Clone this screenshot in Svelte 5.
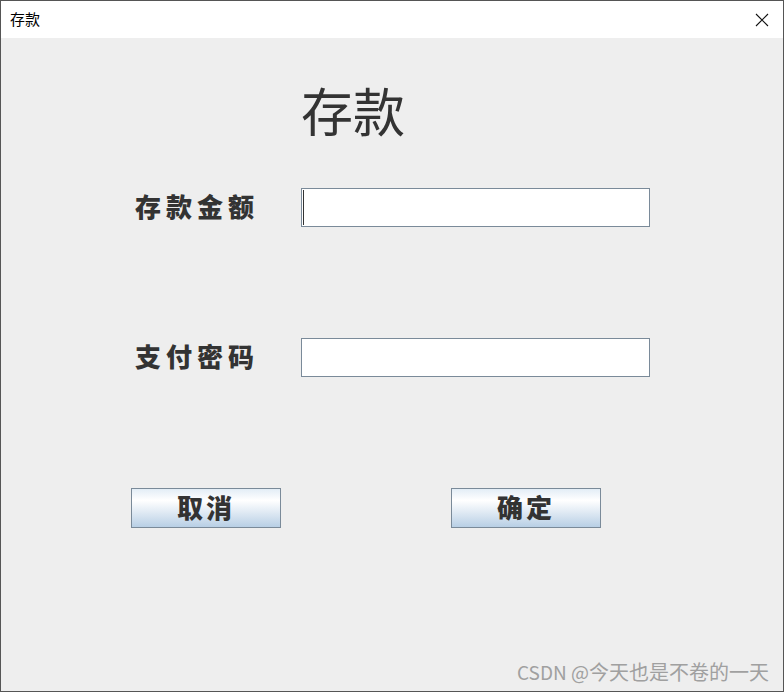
<script>
  let amount = $state('');
  let password = $state('');
</script>

<div class="window">
  <header class="titlebar">
    <span class="wintitle">存款</span>
    <svg class="close" width="14" height="14" viewBox="0 0 14 14" aria-label="关闭">
      <path d="M1 1 L13 13 M13 1 L1 13" stroke="#111" stroke-width="1.1" fill="none" />
    </svg>
  </header>
  <main class="content">
    <h1 class="heading">存款</h1>
    <div class="row first">
      <label class="label" for="amt">存款金额</label>
      <div class="field focused">
        <span class="caret"></span>
        <input id="amt" bind:value={amount} />
      </div>
    </div>
    <div class="row second">
      <label class="label" for="pwd">支付密码</label>
      <div class="field">
        <input id="pwd" type="password" bind:value={password} />
      </div>
    </div>
    <div class="actions">
      <button class="btn">取消</button>
      <button class="btn">确定</button>
    </div>
    <div class="watermark"><span class="latin">CSDN @</span>今天也是不卷的一天</div>
  </main>
</div>

<style>
  :global(body) {
    margin: 0;
    background: #eeeeee;
  }
  .window {
    box-sizing: border-box;
    width: 784px;
    height: 692px;
    border: 1px solid #555555;
    display: flex;
    flex-direction: column;
    font-family: "Noto Sans CJK SC", "Liberation Sans", sans-serif;
  }
  .titlebar {
    height: 37px;
    flex: none;
    background: #ffffff;
    display: flex;
    align-items: center;
    justify-content: space-between;
    padding: 0 14px 0 9px;
  }
  .wintitle {
    font-size: 15px;
    color: #000000;
    line-height: 35px;
    padding-bottom: 2px;
  }
  .close {
    display: block;
  }
  .content {
    flex: 1;
    background: #eeeeee;
    display: flex;
    flex-direction: column;
    min-height: 0;
  }
  .heading {
    margin: 41px 0 0 300px;
    height: 65px;
    font-size: 52px;
    font-weight: 400;
    line-height: 62px;
    color: #333333;
  }
  .row {
    display: flex;
    align-items: center;
    height: 39px;
    padding-left: 134px;
  }
  .first {
    margin-top: 44px;
  }
  .second {
    margin-top: 111px;
  }
  .label {
    width: 166px;
    height: 39px;
    font-size: 26px;
    font-weight: 900;
    letter-spacing: 5px;
    color: #333333;
    line-height: 36px;
    white-space: nowrap;
  }
  .field {
    position: relative;
    box-sizing: border-box;
    width: 349px;
    height: 39px;
    background: #ffffff;
    border: 1px solid #7a8a99;
  }
  .field input {
    box-sizing: border-box;
    width: 100%;
    height: 100%;
    border: 0;
    outline: 0;
    padding: 0 4px;
    background: transparent;
    display: block;
  }
  .caret {
    position: absolute;
    left: 1px;
    top: 1px;
    bottom: 1px;
    width: 1px;
    background: #333333;
  }
  .actions {
    display: flex;
    gap: 170px;
    margin-top: 111px;
    padding-left: 130px;
  }
  .btn {
    box-sizing: border-box;
    width: 150px;
    height: 40px;
    padding: 0 0 3px;
    border: 1px solid #7a8a99;
    background: linear-gradient(180deg, #e3edf6 0%, #ffffff 30%, #e6eef6 55%, #b8cfe5 100%);
    font-family: inherit;
    font-size: 26px;
    font-weight: 900;
    letter-spacing: 3px;
    color: #333333;
    line-height: 1;
  }
  .watermark {
    margin-top: auto;
    padding: 0 14px 6px 0;
    text-align: right;
    font-size: 20px;
    line-height: 26px;
    color: #a0a0a0;
  }
  .latin {
    font-size: 19px;
  }
</style>
